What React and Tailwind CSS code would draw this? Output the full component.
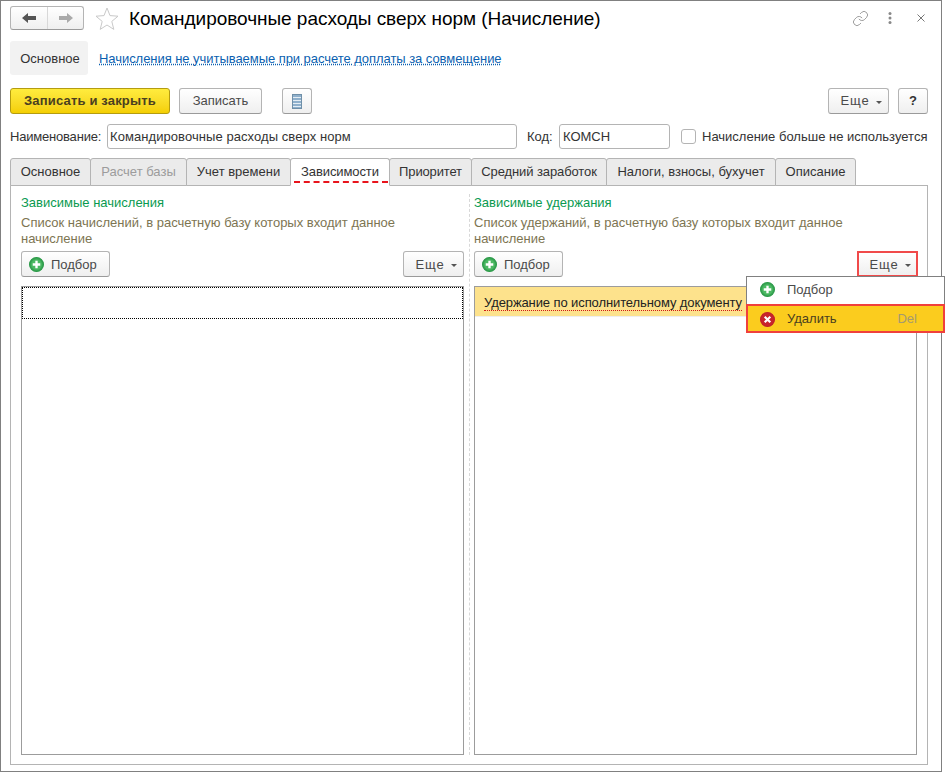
import React from "react";
import { Link as LinkIcon } from "lucide-react";

const btn = "flex items-center justify-center h-[26px] rounded-[3px] border border-[#b4b4b4] border-b-[#9a9a9a] bg-gradient-to-b from-white to-[#efefef] text-[#4a4a4a] shrink-0";

function Plus() {
  return (
    <svg width="15" height="15" viewBox="0 0 14 14" className="shrink-0">
      <circle cx="7" cy="7" r="6.5" fill="#3aa655" stroke="#2b9a48" />
      <circle cx="7" cy="7" r="5" fill="#4cb963" />
      <path d="M7 3.5v7M3.5 7h7" stroke="#fff" strokeWidth="2.2" />
    </svg>
  );
}
function Cross() {
  return (
    <svg width="15" height="15" viewBox="0 0 14 14" className="shrink-0">
      <circle cx="7" cy="7" r="6.5" fill="#c8242b" stroke="#c02028" />
      <path d="M4.4 4.4l5.2 5.2M9.6 4.4l-5.2 5.2" stroke="#fff" strokeWidth="2" />
    </svg>
  );
}
function Caret() {
  return <span className="ml-[7px] w-0 h-0 border-x-[3px] border-x-transparent border-t-[3px] border-t-[#555] mt-[2px]" />;
}
function More({ red, low }) {
  return (
    <div className={`${btn} w-[61px] pl-[6px] tracking-[0.8px] ${low ? "pt-px" : ""} ${red ? "!border-2 !border-[#f04a4a] !rounded-none -mr-px" : ""}`}>
      Еще<Caret />
    </div>
  );
}
function Pick() {
  return (
    <div className={`${btn} w-[89px] justify-start pl-[7px] pt-px gap-[7px]`}>
      <Plus />
      Подбор
    </div>
  );
}
function Tab({ w, active, muted, children }) {
  return (
    <div
      className={`relative flex items-center justify-center h-[28px] border border-[#b4b4b4] rounded-t-[3px] -mr-px shrink-0 ${
        active ? "bg-white border-b-white z-10" : "bg-[#ebebeb]"
      } ${muted ? "text-[#9c9c9c]" : "text-[#333]"}`}
      style={{ width: w + 1 }}
    >
      {children}
      {active && <span className="absolute left-[3px] right-[1px] bottom-[2px] border-b-2 border-dashed border-[#e8141c]" />}
    </div>
  );
}

export default function App() {
  return (
    <div className="relative w-[945px] h-[773px] bg-white overflow-hidden text-[13px] leading-[16px] text-[#333] font-['Liberation_Sans',Arial,sans-serif]">
      <div className="w-[942px] h-[772px] border border-[#808080] pl-[9px] pr-[13px] flex flex-col">
        {/* header */}
        <div className="flex items-center h-[24px] mt-[5px] shrink-0">
          <div className="flex w-[74px] h-[24px] rounded-[3px] border border-[#b4b4b4] border-b-[#9a9a9a] bg-gradient-to-b from-white to-[#efefef]">
            <div className="w-[37px] flex items-center justify-center border-r border-[#d8d8d8]">
              <svg width="14" height="10" viewBox="0 0 14 10"><path d="M0 5l6-5v3h8v4H6v3z" fill="#555" /></svg>
            </div>
            <div className="flex-1 flex items-center justify-center">
              <svg width="14" height="10" viewBox="0 0 14 10"><path d="M14 5L8 0v3H0v4h8v3z" fill="#aaa" /></svg>
            </div>
          </div>
          <svg width="24" height="23" viewBox="0 0 24 23" className="ml-[11px]">
            <path d="M12 1l3 7.6 8 .6-6.2 5.2 2 8L12 18l-6.8 4.4 2-8L1 9.2l8-.6z" fill="#fff" stroke="#c9c9c9" />
          </svg>
          <div className="ml-[10px] mt-px text-[19px] leading-[24px] tracking-[-0.04px] text-black whitespace-nowrap">Командировочные расходы сверх норм (Начисление)</div>
          <div className="ml-auto flex items-center text-[#888]">
            <LinkIcon size={17} strokeWidth={1} className="text-[#777]" />
            <svg width="4" height="14" viewBox="0 0 4 14" className="ml-[19px]">
              <circle cx="2" cy="2.5" r="1.5" fill="#888" /><circle cx="2" cy="7" r="1.5" fill="#888" /><circle cx="2" cy="11.5" r="1.5" fill="#888" />
            </svg>
            <svg width="8" height="8" viewBox="0 0 8 8" className="ml-[25px] mr-[3px]"><path d="M.5.5l7 7M7.5.5l-7 7" stroke="#777" /></svg>
          </div>
        </div>
        {/* nav */}
        <div className="flex items-center h-[34px] mt-[11px] shrink-0">
          <div className="flex items-center justify-center w-[78px] h-[34px] pl-[2px] pt-px bg-[#f2f2f2] rounded-[3px]">Основное</div>
          <span className="ml-[11px] mt-[2px] tracking-[-0.05px] text-[#0b5fb0] underline decoration-dotted decoration-[#0b5fb0]">Начисления не учитываемые при расчете доплаты за совмещение</span>
        </div>
        {/* toolbar */}
        <div className="flex items-center mt-[13px] h-[26px] shrink-0">
          <div className="flex items-center justify-center w-[160px] h-[26px] rounded-[3px] border border-[#b49c10] bg-gradient-to-b from-[#ffec3d] to-[#f4cf00] font-bold tracking-[0.17px] text-[#4a4020]">Записать и закрыть</div>
          <div className={`${btn} w-[83px] ml-[9px]`}>Записать</div>
          <div className={`${btn} w-[30px] ml-[20px]`}>
            <svg width="10" height="15" viewBox="0 0 10 15">
              <rect x="0.5" y="0.5" width="9" height="14" fill="#8fb0cc" stroke="#6f8fa8" />
              <path d="M1 3.5h8M1 6.5h8M1 9.5h8M1 12.5h8" stroke="#e4edf4" />
            </svg>
          </div>
          <div className="ml-auto flex items-center">
            <More />
            <div className={`${btn} w-[30px] ml-[9px] font-bold !text-[#333]`}>?</div>
          </div>
        </div>
        {/* fields */}
        <div className="flex items-center mt-[10px] h-[25px] shrink-0">
          <span className="w-[97px] tracking-[-0.2px]">Наименование:</span>
          <div className="flex items-center w-[410px] h-[25px] pl-[2px] tracking-[0.07px] border border-[#b4b4b4] rounded-[3px]">Командировочные расходы сверх норм</div>
          <span className="ml-[10px] w-[32px]">Код:</span>
          <div className="flex items-center w-[111px] h-[25px] pl-[3px] border border-[#b4b4b4] rounded-[3px]">КОМСН</div>
          <span className="ml-[11px] w-[15px] h-[15px] border border-[#b4b4b4] rounded-[3px]" />
          <span className="ml-[6px] whitespace-nowrap">Начисление больше не используется</span>
        </div>
        {/* tabs */}
        <div className="flex mt-[9px] h-[28px] shrink-0 -mb-px">
          <Tab w={80}>Основное</Tab>
          <Tab w={96} muted>Расчет базы</Tab>
          <Tab w={104}>Учет времени</Tab>
          <Tab w={99} active><span className="tracking-[-0.1px]">Зависимости</span></Tab>
          <Tab w={82}><span className="tracking-[-0.15px]">Приоритет</span></Tab>
          <Tab w={135}><span className="tracking-[-0.1px]">Средний заработок</span></Tab>
          <Tab w={169}>Налоги, взносы, бухучет</Tab>
          <Tab w={80}>Описание</Tab>
        </div>
        {/* panel */}
        <div className="flex-1 mb-[6px] border border-[#b4b4b4] flex pl-[10px] pr-[10px] pt-[9px] pb-[9px] min-h-0">
          <div className="w-[443px] flex flex-col shrink-0">
            <div className="text-[#0a9a50]">Зависимые начисления</div>
            <div className="mt-[4px] text-[#7d7552]">Список начислений, в расчетную базу которых входит данное<br />начисление</div>
            <div className="flex justify-between mt-[4px] shrink-0"><Pick /><More low /></div>
            <div className="mt-[9px] flex-1 border border-[#9c9c9c]">
              <div className="h-[32px] border border-dotted border-black" />
            </div>
          </div>
          <div className="w-[10px] mx-0 flex justify-center shrink-0 -mt-px">
            <div className="border-l border-dashed border-[#d8d8d8] h-full" />
          </div>
          <div className="w-[443px] flex flex-col shrink-0">
            <div className="text-[#0a9a50]">Зависимые удержания</div>
            <div className="mt-[4px] text-[#7d7552]">Список удержаний, в расчетную базу которых входит данное<br />начисление</div>
            <div className="flex justify-between mt-[4px] shrink-0"><Pick /><More red low /></div>
            <div className="mt-[9px] flex-1 border border-[#9c9c9c] overflow-hidden">
              <div className="flex items-center h-[27px] pt-[2px] bg-[#fde28c] pl-[9px] border-b border-[#eee] box-content">
                <span className="border-b border-dotted border-[#d01818] leading-[15px] whitespace-nowrap tracking-[-0.1px] text-[#222]">Удержание по исполнительному документу</span>
              </div>
            </div>
          </div>
        </div>
      </div>
      {/* popup menu */}
      <div className="absolute left-[746px] top-[276px] w-[199px] h-[57px] bg-white border border-[#808080] flex flex-col">
        <div className="flex items-center h-[27px] pl-[13px] pb-[2px] gap-[12px] text-[#4a4a4a]"><Plus />Подбор</div>
        <div className="flex items-center flex-1 pl-[12px] pr-[26px] pt-px gap-[12px] bg-[#fbcc1e] border-2 border-[#f0403c] -mx-px -mb-px text-[#4a4020]">
          <Cross />
          <span>Удалить</span>
          <span className="ml-auto text-[#a59a70]">Del</span>
        </div>
      </div>
    </div>
  );
}
